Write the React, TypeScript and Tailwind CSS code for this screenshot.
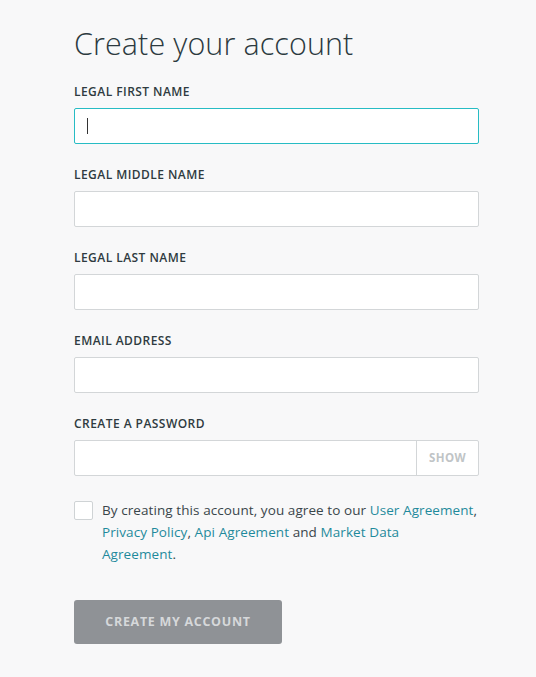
import { useState } from "react";

const label = "block text-[12px] font-semibold leading-[16px] tracking-[0.45px] text-[#2f3b40]";
const link = "text-[#1f8a9c]";

function Field({ text, focused }: { text: string; focused?: boolean }) {
  return (
    <div className="mb-[23px]">
      <label className={label}>{text}</label>
      <div
        className={
          focused
            ? "mt-[8px] flex h-[36px] w-full items-center rounded-[2px] border border-[#27bcc4] bg-white px-3"
            : "mt-[8px] h-[36px] w-full rounded-[2px] border border-[#d3d6d8] bg-white"
        }
      >
        {focused && <span className="h-[16px] w-px bg-[#333]" />}
      </div>
    </div>
  );
}

export default function App() {
  const [checked, setChecked] = useState(false);
  return (
    <div className="min-h-[677px] bg-[#f8f8f9] font-['Open_Sans',sans-serif]">
      <div className="ml-[74px] w-[405px] pt-[24px]">
        <h1 className="text-[30.5px] font-light leading-[38px] tracking-[0.1px] text-[#2c3a40]">Create your account</h1>
        <div className="mt-[22px]">
          <Field text="LEGAL FIRST NAME" focused />
          <Field text="LEGAL MIDDLE NAME" />
          <Field text="LEGAL LAST NAME" />
          <Field text="EMAIL ADDRESS" />
          <div>
            <label className={label}>CREATE A PASSWORD</label>
            <div className="mt-[8px] flex h-[36px] w-full rounded-[2px] border border-[#d3d6d8] bg-white">
              <div className="flex-1" />
              <button className="w-[62px] border-l border-[#d3d6d8] text-[11.5px] font-bold tracking-[0.4px] text-[#c0c4c6]">
                SHOW
              </button>
            </div>
          </div>
        </div>
        <div className="mt-[23px] flex gap-[9px]">
          <button
            onClick={() => setChecked(!checked)}
            className="mt-[2px] h-[19px] w-[19px] shrink-0 rounded-[2px] border border-[#cfd3d5] bg-white"
          />
          <p className="whitespace-nowrap text-[13.5px] leading-[22px] tracking-[0.08px] text-[#3a464b]">
            By creating this account, you agree to our <a className={link}>User Agreement</a>,
            <br />
            <a className={link}>Privacy Policy</a>, <a className={link}>Api Agreement</a> and <a className={link}>Market Data</a>
            <br />
            <a className={link}>Agreement</a>.
          </p>
        </div>
        <button className="mt-[35px] h-[44px] w-[208px] rounded-[3px] bg-[#8f9296] text-[12.5px] font-bold tracking-[0.7px] text-[#d6d8da]">
          CREATE MY ACCOUNT
        </button>
      </div>
    </div>
  );
}
